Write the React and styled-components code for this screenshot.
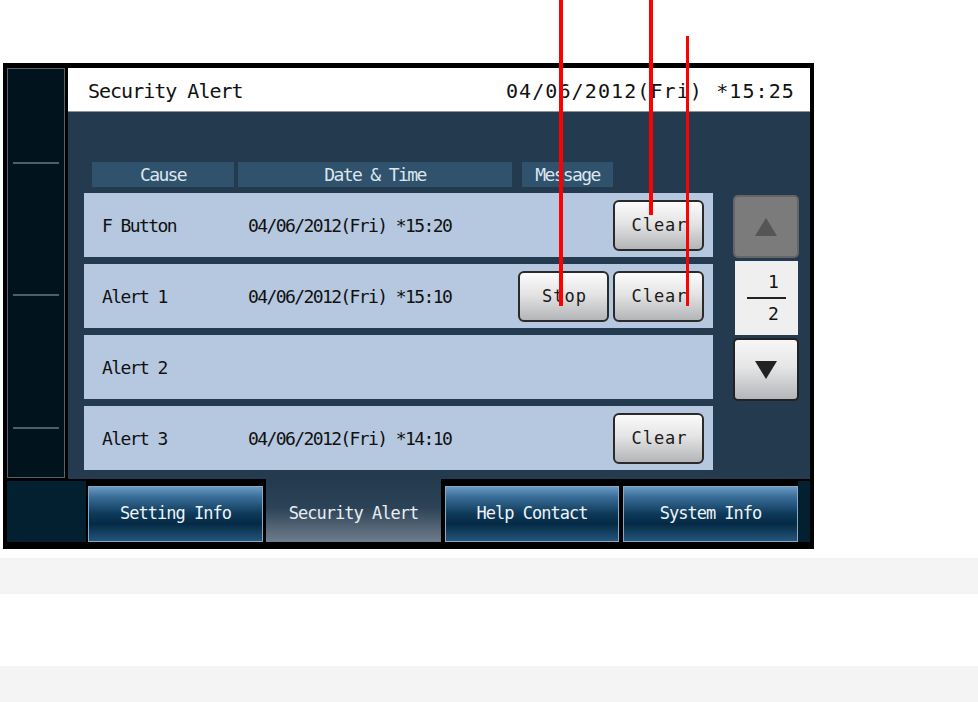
import React from "react";
import styled, { createGlobalStyle } from "styled-components";

const GlobalStyle = createGlobalStyle`
  body {
    margin: 0;
    background: #ffffff;
    font-family: "DejaVu Sans Mono", "Liberation Mono", monospace;
  }
`;

const rows = [
  { cause: "F Button", time: "04/06/2012(Fri) *15:20", buttons: ["Clear"] },
  { cause: "Alert 1", time: "04/06/2012(Fri) *15:10", buttons: ["Stop", "Clear"] },
  { cause: "Alert 2", time: "", buttons: [] },
  { cause: "Alert 3", time: "04/06/2012(Fri) *14:10", buttons: ["Clear"] },
];

const tabs = [
  { label: "Setting Info", width: 175, gap: 2 },
  { label: "Security Alert", width: 175, gap: 3, active: true },
  { label: "Help Contact", width: 174, gap: 4 },
  { label: "System Info", width: 175, gap: 4 },
];

const callouts = [
  { left: 559, top: 0, height: 306, width: 4 },
  { left: 649, top: 0, height: 215, width: 4 },
  { left: 686, top: 36, height: 270, width: 3 },
];

const App = () => {
  return (
    <Page>
      <GlobalStyle />
      <Frame>
        <Top>
          <Sidebar>
            <Slot $h={93} />
            <Divider />
            <Slot $h={130} />
            <Divider />
            <Slot $h={131} />
            <Divider />
            <Slot />
          </Sidebar>
          <Main>
            <Header>
              <Title>Security Alert</Title>
              <Clock>04/06/2012(Fri) *15:25</Clock>
            </Header>
            <Body>
              <ListCol>
                <ColumnHeads>
                  <HeadCell $w={142}>Cause</HeadCell>
                  <HeadCell $w={274} $gap={4}>
                    Date &amp; Time
                  </HeadCell>
                  <HeadCell $w={91} $gap={10}>
                    Message
                  </HeadCell>
                </ColumnHeads>
                <Rows>
                  {rows.map((r) => (
                    <Row key={r.cause}>
                      <Cause>{r.cause}</Cause>
                      <Time>{r.time}</Time>
                      <Actions>
                        {r.buttons.map((b) => (
                          <ActionButton key={b}>{b}</ActionButton>
                        ))}
                      </Actions>
                    </Row>
                  ))}
                </Rows>
              </ListCol>
              <Pager>
                <PageButton disabled>
                  <svg width="24" height="20" viewBox="0 0 24 20">
                    <polygon points="12,1 23,19 1,19" fill="#555" />
                  </svg>
                </PageButton>
                <PageIndicator>
                  <span>1</span>
                  <Fraction />
                  <span>2</span>
                </PageIndicator>
                <PageButton>
                  <svg width="24" height="20" viewBox="0 0 24 20">
                    <polygon points="1,1 23,1 12,19" fill="#222" />
                  </svg>
                </PageButton>
              </Pager>
            </Body>
          </Main>
        </Top>
        <TabBar>
          <Fill $w={79} />
          {tabs.map((t) =>
            t.active ? (
              <ActiveTab key={t.label} $w={t.width} $gap={t.gap}>
                {t.label}
              </ActiveTab>
            ) : (
              <Tab key={t.label} $w={t.width} $gap={t.gap}>
                {t.label}
              </Tab>
            )
          )}
          <Fill $w={12} />
        </TabBar>
      </Frame>
      <Band />
      <Band $gap={72} />
      {callouts.map((c, i) => (
        <Callout
          key={i}
          style={{ left: c.left, top: c.top, height: c.height, width: c.width }}
        />
      ))}
    </Page>
  );
};

export default App;

const Page = styled.div`
  position: relative;
  width: 978px;
  height: 702px;
  overflow: hidden;
  padding-top: 63px;
  box-sizing: border-box;
`;

const Frame = styled.div`
  margin-left: 3px;
  width: 811px;
  height: 486px;
  box-sizing: border-box;
  padding: 5px 4px 7px 4px;
  background: #000;
  display: flex;
  flex-direction: column;
`;

const Top = styled.div`
  display: flex;
  height: 411px;
`;

const Sidebar = styled.div`
  width: 58px;
  height: 410px;
  box-sizing: border-box;
  border: 1px solid #56636c;
  background: #01141d;
  display: flex;
  flex-direction: column;
`;

const Slot = styled.div`
  height: ${(p) => (p.$h ? `${p.$h}px` : "auto")};
  flex: ${(p) => (p.$h ? "none" : "1")};
`;

const Divider = styled.div`
  height: 2px;
  margin: 0 5px;
  background: #4f5f69;
`;

const Main = styled.div`
  margin-left: 3px;
  width: 742px;
  display: flex;
  flex-direction: column;
`;

const Header = styled.div`
  background: #ffffff;
  border-bottom: 1px solid #8d939a;
  display: flex;
  align-items: center;
  justify-content: space-between;
  padding: 2px 15px 0 20px;
  height: 41px;
  color: #111;
  font-size: 20px;
`;

const Title = styled.div`
  letter-spacing: -1px;
`;

const Clock = styled.div`
  letter-spacing: 1.1px;
`;

const Body = styled.div`
  flex: 1;
  background: #243a4f;
  display: flex;
  padding-left: 16px;
`;

const ListCol = styled.div`
  width: 629px;
  display: flex;
  flex-direction: column;
`;

const ColumnHeads = styled.div`
  display: flex;
  margin: 50px 0 0 8px;
  height: 25px;
`;

const HeadCell = styled.div`
  width: ${(p) => p.$w}px;
  margin-left: ${(p) => p.$gap || 0}px;
  background: #30526d;
  color: #dbe6ee;
  font-size: 18px;
  letter-spacing: -1.6px;
  display: flex;
  align-items: center;
  justify-content: center;
`;

const Rows = styled.div`
  display: flex;
  flex-direction: column;
  gap: 7px;
  margin-top: 6px;
`;

const Row = styled.div`
  height: 64px;
  background: #b6c8e0;
  display: flex;
  align-items: center;
  padding: 0 9px 0 18px;
  color: #111;
  font-size: 18px;
  letter-spacing: -1.6px;
`;

const Cause = styled.div`
  width: 146px;
`;

const Time = styled.div``;

const Actions = styled.div`
  margin-left: auto;
  display: flex;
  gap: 4px;
`;

const ActionButton = styled.button`
  width: 91px;
  height: 51px;
  box-sizing: border-box;
  border: 2px solid #2a2a2a;
  border-radius: 6px;
  background: linear-gradient(to bottom, #fbfbfb 0%, #e4e4e4 45%, #b3b5b8 100%);
  font-family: "DejaVu Sans Mono", monospace;
  font-size: 17px;
  letter-spacing: 1px;
  color: #1a1a1a;
  padding: 0 0 0 2px;
`;

const Pager = styled.div`
  margin: 83px 0 0 20px;
  width: 66px;
  display: flex;
  flex-direction: column;
  align-items: flex-start;
`;

const PageButton = styled.button`
  width: 66px;
  height: 63px;
  box-sizing: border-box;
  border-radius: 5px;
  padding: 0;
  display: flex;
  align-items: center;
  justify-content: center;
  border: 2px solid ${(p) => (p.disabled ? "#656565" : "#222")};
  background: ${(p) =>
    p.disabled
      ? "#7b7b7b"
      : "linear-gradient(to bottom, #f7f7f7 0%, #e6e6e6 45%, #b4b6b9 100%)"};
`;

const PageIndicator = styled.div`
  width: 63px;
  height: 74px;
  margin: 3px 0 3px 2px;
  background: #efefef;
  display: flex;
  flex-direction: column;
  align-items: center;
  justify-content: center;
  gap: 6px;
  color: #111;
  font-size: 18px;

  span {
    padding-left: 14px;
    line-height: 18px;
  }
`;

const Fraction = styled.div`
  width: 39px;
  height: 2px;
  background: #222;
`;

const TabBar = styled.div`
  height: 63px;
  display: flex;
  align-items: flex-end;
  background: #000;
`;

const Fill = styled.div`
  width: ${(p) => p.$w}px;
  height: 61px;
  background: #02202f;
`;

const Tab = styled.div`
  width: ${(p) => p.$w}px;
  margin-left: ${(p) => p.$gap}px;
  height: 56px;
  box-sizing: border-box;
  border: 1px solid #86a9c6;
  background: linear-gradient(
    to bottom,
    #6a9ac3 0%,
    #3a6e99 18%,
    #0d3959 50%,
    #052a45 68%,
    #24557b 100%
  );
  color: #eef3f6;
  font-size: 17px;
  letter-spacing: -1px;
  display: flex;
  align-items: center;
  justify-content: center;
  padding-bottom: 2px;
`;

const ActiveTab = styled.div`
  width: ${(p) => p.$w}px;
  margin-left: ${(p) => p.$gap}px;
  height: 63px;
  background: linear-gradient(to bottom, #243a4f 0%, #2c4256 45%, #6f7d8c 100%);
  color: #e9eef3;
  font-size: 17px;
  letter-spacing: -1px;
  display: flex;
  align-items: center;
  justify-content: center;
  padding-top: 4px;
  box-sizing: border-box;
`;

const Band = styled.div`
  height: 36px;
  margin-top: ${(p) => p.$gap || 9}px;
  background: #f4f4f4;
`;

const Callout = styled.div`
  position: absolute;
  background: #ff0000;
`;
